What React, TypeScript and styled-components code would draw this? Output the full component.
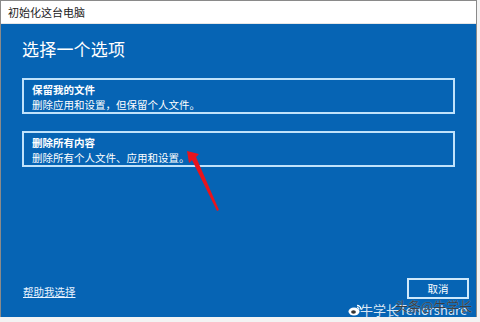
import React from "react";
import styled, { createGlobalStyle } from "styled-components";

const Global = createGlobalStyle`
  html, body { margin: 0; padding: 0; background: #f3f3f3; }
  body { font-family: "Noto Sans CJK SC", "Noto Sans", sans-serif; }
  #root { width: 480px; height: 322px; overflow: hidden; position: relative; }
`;

const Window = styled.div`
  width: 477px;
  height: 317px;
  box-sizing: border-box;
  border: 1px solid #8a8a8a;
  border-bottom: none;
  display: flex;
  flex-direction: column;
  background: #fff;
`;

const TitleBar = styled.div`
  height: 22px;
  display: flex;
  align-items: center;
  padding-left: 7px;
  font-size: 11px;
  color: #222;
  background: #fff;
  border-bottom: 1px solid #e6e6e6;
`;

const Content = styled.div`
  flex: 1;
  background: #0664b4;
  display: flex;
  flex-direction: column;
  padding: 14px 7px 18px 21px;
  color: #fff;
`;

const Heading = styled.div`
  font-size: 17px;
  line-height: 22px;
  font-weight: 400;
  letter-spacing: 0.2px;
`;

const Options = styled.div`
  display: flex;
  flex-direction: column;
  gap: 17px;
  margin-top: 18px;
  margin-right: 14px;
`;

const Card = styled.div`
  height: 36px;
  box-sizing: border-box;
  border: 2px solid #bfe2fb;
  padding: 1px 8px 0;
  display: flex;
  flex-direction: column;
  justify-content: center;
`;

const CardTitle = styled.div`
  font-size: 10.5px;
  line-height: 15px;
  font-weight: 700;
`;

const CardText = styled.div`
  font-size: 10.5px;
  line-height: 15px;
`;

const Footer = styled.div`
  margin-top: auto;
  display: flex;
  justify-content: space-between;
  align-items: center;
`;

const HelpLink = styled.a`
  font-size: 10.5px;
  color: #e8f3ff;
  text-decoration: underline;
  margin-left: 1px;
  margin-top: 6px;
`;

const Button = styled.button`
  width: 62px;
  height: 21px;
  box-sizing: border-box;
  border: 2px solid #cfe9fb;
  background: #0664b4;
  color: #fff;
  font-family: inherit;
  font-size: 10.5px;
  padding: 0;
`;

const Arrow = styled.svg`
  position: absolute;
  left: 182px;
  top: 146px;
`;

const Watermark = styled.div`
  position: absolute;
  left: 348px;
  top: 296px;
  width: 132px;
  height: 24px;
  pointer-events: none;
`;

const WmBase = styled.div`
  position: absolute;
  left: 12px;
  top: 5px;
  font-size: 13px;
  line-height: 17px;
  color: rgba(255, 255, 255, 0.85);
  white-space: nowrap;
  font-family: "Noto Sans CJK SC", "Liberation Sans", sans-serif;
`;

const WmTop = styled.div`
  position: absolute;
  left: 47px;
  top: 2px;
  font-size: 13px;
  line-height: 15px;
  color: rgba(40, 40, 40, 0.85);
  white-space: nowrap;
  text-shadow: 0 0 1px rgba(255,255,255,0.6);
`;

const WeiboIcon = styled.svg`
  position: absolute;
  left: 0;
  top: 8px;
`;

export default function App() {
  return (
    <>
      <Global />
      <Window>
        <TitleBar>初始化这台电脑</TitleBar>
        <Content>
          <Heading>选择一个选项</Heading>
          <Options>
            <Card>
              <CardTitle>保留我的文件</CardTitle>
              <CardText>删除应用和设置，但保留个人文件。</CardText>
            </Card>
            <Card>
              <CardTitle>删除所有内容</CardTitle>
              <CardText>删除所有个人文件、应用和设置。</CardText>
            </Card>
          </Options>
          <Footer>
            <HelpLink>帮助我选择</HelpLink>
            <Button>取消</Button>
          </Footer>
        </Content>
      </Window>
      <Arrow width="44" height="70" viewBox="0 0 44 70">
        <polygon points="5,5 17,8 14,11 37,64 35,65 10,14 7,17" fill="#e8141c" />
      </Arrow>
      <Watermark>
        <WeiboIcon width="14" height="12" viewBox="0 0 14 12">
          <ellipse cx="6" cy="7.5" rx="5.5" ry="4" fill="#fff" />
          <ellipse cx="5.5" cy="8" rx="2.4" ry="1.8" fill="#333" />
          <path d="M9 1.5 A4 4 0 0 1 13 5.5" stroke="#fff" strokeWidth="1.4" fill="none" />
          <path d="M9 3.5 A2 2 0 0 1 11 5.5" stroke="#fff" strokeWidth="1.2" fill="none" />
        </WeiboIcon>
        <WmBase>牛学长Tenorshare</WmBase>
        <WmTop>头条@牛学长</WmTop>
      </Watermark>
    </>
  );
}
